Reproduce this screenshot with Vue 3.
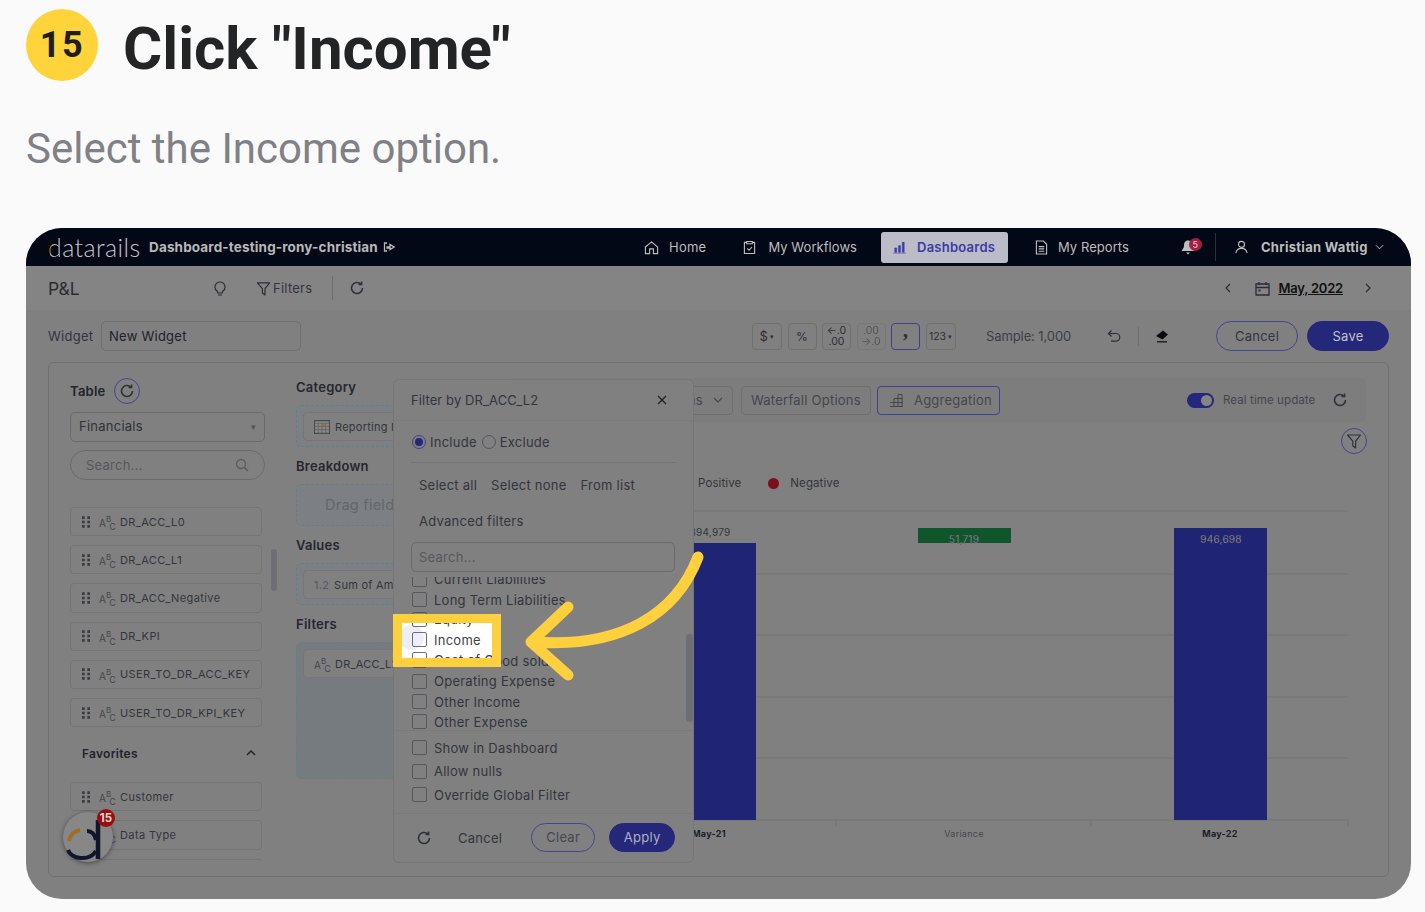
<template>
  <div class="page">
    <svg class="sprite" width="0" height="0">
      <symbol id="refresh" viewBox="0 0 16 16"><path d="M13.500 8a5.500 5.500 0 1 1-1.700-4M12.600 1.400v3h-3" fill="none" stroke="currentColor" stroke-width="1.600"/></symbol>
      <symbol id="funnel" viewBox="0 0 16 16"><path d="M1.500 2h13L9.600 8.200V15L6.800 12.800V8.200z" fill="none" stroke="currentColor" stroke-width="1.200" stroke-linejoin="round"/></symbol>
      <symbol id="grip" viewBox="0 0 9 13"><path d="M0 0h3v3H0zM6 0h3v3H6zM0 5h3v3H0zM6 5h3v3H6zM0 10h3v3H0zM6 10h3v3H6z" fill="currentColor"/></symbol>
      <symbol id="chev" viewBox="0 0 10 6"><path d="M1 1l4 4 4-4" fill="none" stroke="currentColor" stroke-width="1.100"/></symbol>
    </svg>

    <header class="head">
      <span class="badge">15</span>
      <h1>Click "Income"</h1>
    </header>
    <p class="lead">Select the Income option.</p>

    <div class="shot">
      <nav class="nav">
        <span class="logo"><i>d</i>atarails</span>
        <span class="board">Dashboard-testing-rony-christian</span>
        <svg class="board-ico" viewBox="0 0 12 10"><path d="M4 1H1.500v8H4M4 5h3V2.500L11 5 7 7.500V6H4z" fill="none" stroke="currentColor" stroke-width="1.300"/></svg>
        <a class="nav-item home">
          <svg viewBox="0 0 16 16"><path d="M1.500 7.500L8 2l6.500 5.500V14.500H10V9.500H6v5H1.500z" fill="none" stroke="currentColor" stroke-width="1.200"/></svg>
          Home
        </a>
        <a class="nav-item flows">
          <svg viewBox="0 0 14 16"><path d="M4 2.500H1.500v12h11v-12H10M4 1.500h6v2.500H4zM4.500 9l2 2 3-3.500" fill="none" stroke="currentColor" stroke-width="1.200"/></svg>
          My Workflows
        </a>
        <a class="nav-item active">
          <svg viewBox="0 0 16 14"><path d="M1 13h14M3 7.500h2V12H3zM7 5h2v7H7zM11 1.500h2V12h-2z" fill="currentColor" stroke="currentColor" stroke-width=".6"/></svg>
          Dashboards
        </a>
        <a class="nav-item reports">
          <svg viewBox="0 0 14 16"><path d="M1.500 1h7.500l3.500 3.500V15h-11zM4 7h6M4 9.500h6M4 12h6" fill="none" stroke="currentColor" stroke-width="1.200"/></svg>
          My Reports
        </a>
        <span class="bell">
          <svg viewBox="0 0 14 16"><path d="M7 1.500c-3 0-4 2.500-4 5 0 2.500-1.500 4-2.500 5.500h13C12.500 10.500 11 9 11 6.500c0-2.500-1-5-4-5zM5 13.500h4l-2 2z" fill="currentColor"/></svg>
          <b>5</b>
        </span>
        <span class="nav-sep"></span>
        <svg class="user" viewBox="0 0 14 14"><path d="M7 1a3.200 3.200 0 1 1 0 6.400A3.200 3.200 0 0 1 7 1zM1 13.500c.5-3.500 3-5 6-5s5.500 1.500 6 5" fill="none" stroke="currentColor" stroke-width="1.200"/></svg>
        <span class="name">Christian Wattig</span>
        <svg class="name-chev"><use href="#chev" /></svg>
      </nav>

      <div class="bar">
        <span class="pl">P&amp;L</span>
        <svg class="bulb" viewBox="0 0 12 15"><path d="M6 1a5 5 0 0 0-3 9c.6.5.8 1 .8 2h4.400c0-1 .2-1.500.8-2a5 5 0 0 0-3-9zM4 14h4" fill="none" stroke="currentColor" stroke-width="1.200"/></svg>
        <svg class="bar-funnel"><use href="#funnel" /></svg>
        <span class="filters">Filters</span>
        <span class="bar-sep"></span>
        <svg class="ico16"><use href="#refresh" /></svg>
        <span class="spring"></span>
        <svg class="arrow-l" viewBox="0 0 6 10"><path d="M5 1L1 5l4 4" fill="none" stroke="currentColor" stroke-width="1.200"/></svg>
        <svg class="cal" viewBox="0 0 15 15"><path d="M1 3h13v11H1zM1 6.500h13M4 1v3M11 1v3" fill="none" stroke="currentColor" stroke-width="1.300"/><path d="M3.500 8.500h2v2h-2z" fill="currentColor"/></svg>
        <span class="date">May, 2022</span>
        <svg class="arrow-r" viewBox="0 0 6 10"><path d="M1 1l4 4-4 4" fill="none" stroke="currentColor" stroke-width="1.200"/></svg>
      </div>

      <div class="tools">
        <span class="w-label">Widget</span>
        <span class="w-input">New Widget</span>
        <span class="fmt f-first">$<em>▾</em></span>
        <span class="fmt">%</span>
        <span class="fmt stack"><u>←.0</u><s>.00</s></span>
        <span class="fmt stack dim"><s>.00</s><u>→.0</u></span>
        <span class="fmt on"><b>,</b></span>
        <span class="fmt small">123<em>▾</em></span>
        <span class="sample">Sample: 1,000</span>
        <svg class="undo" viewBox="0 0 14 14"><path d="M4.500 1.500L1.500 4.500l3 3M1.500 4.500H9a3.800 3.800 0 0 1 0 7.600H4" fill="none" stroke="currentColor" stroke-width="1.200"/></svg>
        <span class="tool-sep"></span>
        <svg class="eraser" viewBox="0 0 14 14"><path d="M8 1.500l5 4-5.500 5L1 7z" fill="currentColor"/><path d="M2 12.800h10" stroke="currentColor" stroke-width="1.200"/></svg>
        <span class="btn-line">Cancel</span>
        <span class="btn-fill">Save</span>
      </div>

      <section class="panel">
        <div class="col-table">
          <div class="table-head">
            <b>Table</b>
            <span class="ring"><svg class="ico16"><use href="#refresh" /></svg></span>
          </div>
          <div class="select">Financials<em>▾</em></div>
          <div class="search">
            Search...
            <svg viewBox="0 0 14 14"><circle cx="6" cy="6" r="4.500" fill="none" stroke="currentColor" stroke-width="1.300"/><path d="M9.500 9.500L13 13" stroke="currentColor" stroke-width="1.500"/></svg>
          </div>
          <div class="fields">
            <div v-for="f in fields" :key="f" class="field">
              <svg class="grip"><use href="#grip" /></svg>
              <span class="abc">A<sup>B</sup><sub>C</sub></span>
              {{ f }}
            </div>
          </div>
          <div class="fav"><b>Favorites</b><svg viewBox="0 0 10 6"><path d="M1 5l4-4 4 4" fill="none" stroke="currentColor" stroke-width="1.500"/></svg></div>
          <div class="fields">
            <div v-for="f in favorites" :key="f" class="field">
              <svg class="grip"><use href="#grip" /></svg>
              <span class="abc">A<sup>B</sup><sub>C</sub></span>
              {{ f }}
            </div>
            <div class="field cut"></div>
          </div>
        </div>
        <span class="list-scroll"></span>

        <div class="col-drop">
          <b>Category</b>
          <div class="drop h42"><span class="chip">
            <svg viewBox="0 0 15 13"><path d="M.5.500h14v12H.5z" fill="#8a8a8a" stroke="#4a4a4a"/><path d="M.5 3h14M.5 6h14M.5 9h14M4 3v9M7.500 3v9M11 3v9" stroke="#5c5c5c" stroke-width=".7"/><path d="M8 4h3v2H8z" fill="#a8682c"/></svg>
            Reporting Month</span></div>
          <b>Breakdown</b>
          <div class="drop h42 placeholder">Drag fields here</div>
          <b>Values</b>
          <div class="drop h42"><span class="chip"><i class="num">1.2</i>Sum of Amount</span></div>
          <b>Filters</b>
          <div class="drop tall"><span class="chip"><span class="abc">A<sup>B</sup><sub>C</sub></span>DR_ACC_L2</span></div>
        </div>

        <div class="col-chart">
          <div class="chart-tools">
            <span class="opt">Options<svg><use href="#chev" /></svg></span>
            <span class="opt">Waterfall Options</span>
            <span class="opt sel">
              <svg viewBox="0 0 15 14"><path d="M1 13.500h13M1 9.500h13M5 5.500h9M5 13.500v-8M9 13.500V1.500h4v12" fill="none" stroke="currentColor" stroke-width="1"/></svg>
              Aggregation
            </span>
            <span class="toggle"><i></i></span>
            <span class="rt">Real time update</span>
            <svg class="ico16"><use href="#refresh" /></svg>
          </div>
          <div class="chart-filter"><span class="ring"><svg class="ico16"><use href="#funnel" /></svg></span></div>
          <div class="legend">
            <span>Positive</span>
            <i></i>
            <span>Negative</span>
          </div>
          <svg class="chart" width="856" height="360" viewBox="510 490 856 360">
            <g stroke="#727272" stroke-width="1">
              <path v-for="y in gridY" :key="y" :d="`M510 ${y}H1348`" />
              <path d="M510 820H1348M836 820v6M1091 820v6M1348 820v6" />
            </g>
            <rect x="663" y="543" width="93" height="277" fill="#202475" />
            <rect x="918" y="528" width="93" height="15" fill="#10562c" />
            <rect x="1174" y="528" width="93" height="292" fill="#202475" />
            <text x="710" y="536" class="val" text-anchor="middle">894,979</text>
            <text x="964" y="543" class="val" text-anchor="middle">51,719</text>
            <text x="1221" y="543" class="val" text-anchor="middle">946,698</text>
            <text x="709" y="837" class="tick bold" text-anchor="middle">May-21</text>
            <text x="964" y="837" class="tick" text-anchor="middle">Variance</text>
            <text x="1220" y="837" class="tick bold" text-anchor="middle">May-22</text>
          </svg>
        </div>
      </section>

      <div class="popup">
        <div class="pop-title">Filter by DR_ACC_L2<svg viewBox="0 0 10 10"><path d="M1 1l8 8M9 1l-8 8" stroke="currentColor" stroke-width="1.300"/></svg></div>
        <div class="radios">
          <span class="radio on"><i></i></span>Include
          <span class="radio"></span>Exclude
        </div>
        <div class="links"><span>Select all</span><span>Select none</span><span>From list</span></div>
        <div class="adv">Advanced filters</div>
        <div class="pop-search">Search...</div>
        <div class="pop-list">
          <div v-for="o in options" :key="o.label" class="opt-row" :class="{ covered: o.covered }"><span class="box"></span>{{ o.label }}</div>
          <span class="pop-scroll"></span>
        </div>
        <div class="pop-checks">
          <div v-for="c in checks" :key="c" class="check"><span class="box"></span>{{ c }}</div>
        </div>
        <div class="pop-foot">
          <svg class="ico16"><use href="#refresh" /></svg>
          <span class="foot-cancel">Cancel</span>
          <span class="foot-clear">Clear</span>
          <span class="foot-apply">Apply</span>
        </div>
      </div>

      <div class="spot">
        <span class="spot-halo"></span>
        <div class="spot-rows">
          <div v-for="o in spotRows" :key="o" class="opt-row"><span class="box"></span>{{ o }}</div>
        </div>
      </div>

      <svg class="pointer" width="1385" height="671" viewBox="26 228 1385 671">
        <path d="M698 557C676 615 620 648 535 642M568 607L531 642L568 675" fill="none" stroke="#ffd03d" stroke-width="11" stroke-linecap="round" stroke-linejoin="round"/>
      </svg>

      <div class="launcher">
        <svg viewBox="0 0 50 50"><path d="M6 29a13 13 0 0 1 11-11" fill="none" stroke="#9c7020" stroke-width="4"/><path d="M5 38c3 9 21 12 28 1M24 19c5 0 8 4 9 9" fill="none" stroke="#10172c" stroke-width="4"/><path d="M35 8v39" stroke="#10172c" stroke-width="4.500"/></svg>
        <b>15</b>
      </div>
    </div>
  </div>
</template>

<script setup>
const fields = ['DR_ACC_L0', 'DR_ACC_L1', 'DR_ACC_Negative', 'DR_KPI', 'USER_TO_DR_ACC_KEY', 'USER_TO_DR_KPI_KEY']
const favorites = ['Customer', 'Data Type']
const gridY = [511, 574, 635, 697, 758]
const options = [
  { label: 'Current Liabilities' },
  { label: 'Long Term Liabilities' },
  { label: 'Equity', covered: true },
  { label: 'Income', covered: true },
  { label: 'Cost of Good sold' },
  { label: 'Operating Expense' },
  { label: 'Other Income' },
  { label: 'Other Expense' }
]
const spotRows = ['Equity', 'Income', 'Cost of Good sold']
const checks = ['Show in Dashboard', 'Allow nulls', 'Override Global Filter']
</script>

<style>
html, body { background: #fafafb; }
</style>

<style scoped>
.page { width: 1425px; height: 912px; overflow: hidden; box-sizing: border-box; padding: 9px 14px 0 26px; background: #fafafb; font-family: Inter, sans-serif; }
.sprite { position: absolute; }
.head { display: flex; align-items: center; gap: 25px; height: 72px; }
.badge { width: 72px; height: 72px; border-radius: 50%; background: #ffd43b; color: #1e1e1e; display: flex; align-items: center; justify-content: center; font: 700 36px Roboto, sans-serif; letter-spacing: 1.500px; }
h1 { margin: 8px 0 0; font: 700 60px/72px Roboto, sans-serif; color: #222426; }
.lead { margin: 42px 0 0; height: 52px; font: 400 42px/52px Roboto, sans-serif; color: #808184; }
.shot { position: relative; width: 1385px; height: 671px; margin-top: 53px; border-radius: 36px; overflow: hidden; background: #808080; color: #2b2d36; font-size: 13px; letter-spacing: .25px; }

.nav { display: flex; align-items: center; height: 38px; background: #030817; color: #bdbdbd; padding-left: 22px; }
.logo { width: 92px; font: 300 25px Lato, sans-serif; color: #c4c4c4; letter-spacing: .4px; }
.logo i { font-style: normal; background: linear-gradient(100deg, #b87a20 32%, #c4c4c4 33%); -webkit-background-clip: text; background-clip: text; color: transparent; }
.board { margin-left: 9px; font-weight: 700; font-size: 13.500px; letter-spacing: .15px; color: #b8b8b8; width: 232px; white-space: nowrap; }
.board-ico { width: 12px; height: 10px; color: #b8b8b8; margin-left: 2px; }
.nav-item { display: flex; align-items: center; gap: 10px; white-space: nowrap; }
.nav-item svg { width: 15px; height: 15px; }
.home { margin-left: 249px; }
.flows { margin-left: 37px; gap: 12px; letter-spacing: .05px; }
.flows svg { width: 13px; }
.active { margin-left: 24px; height: 31px; width: 127px; box-sizing: border-box; padding-left: 11px; background: #bcbcc8; border-radius: 3px; color: #3b3ba6; font-weight: 600; }
.reports { margin-left: 27px; letter-spacing: .05px; }
.reports svg { width: 13px; }
.bell { position: relative; margin-left: 52px; width: 14px; height: 16px; }
.bell svg { width: 14px; height: 16px; display: block; }
.bell b { position: absolute; left: 8px; top: -1px; width: 13px; height: 13px; border-radius: 50%; background: #a81c44; color: #c8c8c8; font-size: 9px; font-weight: 500; line-height: 13px; text-align: center; letter-spacing: 0; }
.nav-sep { width: 1px; height: 28px; background: #2b2f3a; margin-left: 20px; }
.user { width: 13px; height: 14px; margin-left: 19px; }
.name { margin-left: 13px; font-weight: 700; width: 112px; white-space: nowrap; letter-spacing: .3px; }
.name-chev { width: 9px; height: 6px; margin-left: 2px; }

.bar { display: flex; align-items: center; height: 44px; background: #848484; padding: 0 40px 0 22px; color: #2a2c33; }
.pl { width: 157px; font-size: 17.500px; letter-spacing: 0; }
.bulb { width: 12px; height: 15px; margin-left: 9px; }
.bar-funnel { width: 15px; height: 15px; margin-left: 30px; }
.filters { margin-left: 2px; width: 38px; color: #33353c; white-space: nowrap; }
.bar-sep { width: 1px; height: 24px; background: #6e6e6e; margin-left: 21px; }
.ico16 { width: 16px; height: 16px; flex: none; color: #2f3138; }
.bar .ico16 { margin-left: 16px; }
.spring { flex: 1; }
.arrow-l, .arrow-r { width: 6px; height: 10px; }
.cal { width: 15px; height: 15px; margin-left: 24px; }
.date { margin-left: 8px; font-weight: 600; text-decoration: underline; letter-spacing: -.2px; white-space: nowrap; color: #111; }
.arrow-r { margin-left: 22px; }

.tools { display: flex; align-items: center; height: 52px; padding: 0 22px; color: #2d2f36; }
.w-label { width: 53px; flex: none; color: #33353c; }
.w-input { width: 200px; flex: none; height: 30px; box-sizing: border-box; border: 1px solid #6f6f6f; border-radius: 5px; padding-left: 7px; line-height: 28px; color: #1f2128; }
.fmt { width: 29px; height: 27px; box-sizing: border-box; border: 1px solid #707070; border-radius: 4px; margin-left: 5.500px; display: flex; align-items: center; justify-content: center; font-size: 12px; flex: none; }
.fmt em { font-style: normal; font-size: 7px; margin-left: 2px; }
.f-first { margin-left: 451px; width: 30px; font-size: 13px; }
.stack { flex-direction: column; line-height: 11px; font-size: 10.500px; letter-spacing: 0; }
.stack u { text-decoration: none; }
.stack s { text-decoration: none; }
.stack.dim { opacity: .55; }
.fmt.on { border-color: #3f3f95; }
.fmt.on b { font: 700 20px/1 "Liberation Serif", serif; position: relative; top: -6px; }
.fmt.small { font-size: 10.500px; letter-spacing: 0; width: 30px; }
.sample { margin-left: 30.500px; color: #3d3f45; width: 86px; flex: none; white-space: nowrap; letter-spacing: -.1px; }
.undo { width: 14px; height: 14px; margin-left: 35px; flex: none; }
.tool-sep { width: 1px; height: 19px; background: #6e6e6e; margin-left: 17px; flex: none; }
.eraser { width: 14px; height: 14px; margin-left: 16px; color: #0c0c10; flex: none; }
.btn-line, .btn-fill { width: 82px; height: 30px; box-sizing: border-box; border-radius: 15px; text-align: center; line-height: 28px; flex: none; }
.btn-line { margin-left: 47px; border: 1px solid #45458f; color: #33353c; }
.btn-fill { margin-left: 9px; background: #24277a; border: 1px solid #24277a; color: #c2c2cc; }

.panel { display: flex; margin: 0 22px; height: 515px; box-sizing: border-box; border: 1px solid #6f6f6f; border-radius: 6px; padding: 15px 22px 0 21px; overflow: hidden; }
.col-table { width: 195px; flex: none; }
.table-head { display: flex; align-items: center; height: 26px; gap: 8px; }
.table-head b { font-weight: 600; color: #22242c; }
.ring { width: 26px; height: 26px; box-sizing: border-box; border: 1px solid #45458f; border-radius: 50%; display: flex; align-items: center; justify-content: center; }
.select { margin-top: 8px; height: 30px; box-sizing: border-box; border: 1px solid #6a6a6a; border-radius: 5px; padding: 0 8px; line-height: 27px; display: flex; justify-content: space-between; color: #2f3138; }
.select em { font-style: normal; font-size: 9px; color: #555; }
.search { margin-top: 8px; height: 30px; box-sizing: border-box; border: 1px solid #6a6a6a; border-radius: 15px; padding: 0 15px; line-height: 27px; display: flex; justify-content: space-between; align-items: center; color: #56585c; }
.search svg { width: 14px; height: 14px; color: #5c5c5c; }
.fields { display: flex; flex-direction: column; gap: 9px; width: 192px; margin-top: 27px; }
.field { display: flex; align-items: center; height: 29.200px; flex: none; box-sizing: border-box; border: 1px solid #747474; border-radius: 4px; padding-left: 11px; font-size: 11px; color: #33353c; letter-spacing: .4px; white-space: nowrap; }
.cut { height: 2px; border-bottom: 0; border-radius: 4px 4px 0 0; }
.grip { width: 8px; height: 12px; color: #3a3a40; margin-right: 9px; flex: none; }
.abc { display: inline-flex; width: 16px; font-size: 10px; color: #45474c; margin-right: 5px; letter-spacing: 0; flex: none; line-height: 1; align-items: flex-end; }
.abc sup { font-size: 8px; margin-bottom: 5px; line-height: 1; vertical-align: baseline; }
.abc sub { font-size: 9px; line-height: 1; margin: 0 0 -3px -2px; vertical-align: baseline; }
.fav { display: flex; justify-content: space-between; align-items: center; margin: 16px 9px 0 12px; height: 20px; font-size: 12px; color: #22242c; }
.fav b { font-weight: 600; }
.fav svg { width: 10px; height: 6px; }
.fav + .fields { margin-top: 19px; }
.list-scroll { width: 6px; height: 42px; background: #6c7075; border-radius: 3px; margin: 171px 0 0 6px; flex: none; }

.col-drop { width: 200px; margin-left: 19px; flex: none; display: flex; flex-direction: column; }
.col-drop b { font-weight: 600; color: #25272e; height: 19px; line-height: 18px; flex: none; margin-bottom: 8px; }
.drop { box-sizing: border-box; border: 1px dashed #5f8088; border-radius: 5px; background: #7c8084; margin-bottom: 10px; flex: none; padding: 6px; }
.h42 { height: 42px; }
.tall { height: 137px; background: #767b80; }
.chip { display: flex; align-items: center; height: 29px; box-sizing: border-box; border: 1px solid #767676; border-radius: 4px; background: #808080; padding-left: 10px; font-size: 11px; white-space: nowrap; overflow: hidden; color: #33353c; }
.chip svg { width: 16px; height: 14px; margin-right: 5px; flex: none; }
.num { font-style: normal; color: #55575c; margin-right: 5px; }
.placeholder { font-size: 14.500px; color: #63666a; padding: 11px 0 0 28px; white-space: nowrap; }

.col-chart { flex: 1; margin-left: 14px; min-width: 0; position: relative; }
.chart-tools { display: flex; align-items: center; justify-content: flex-end; height: 44px; background: #7d7d7d; border-radius: 4px; margin-right: 0; padding-right: 18px; box-sizing: border-box; color: #44464c; }
.opt { height: 29px; box-sizing: border-box; border: 1px solid #6f6f6f; border-radius: 4px; display: flex; align-items: center; padding: 0 9px; margin-right: 6px; white-space: nowrap; flex: none; }
.opt:first-child { margin-right: 8px; }
.opt svg { width: 10px; height: 6px; margin-left: 10px; }
.opt.sel { border-color: #3f3f95; padding: 0 7px 0 11px; }
.opt.sel svg { width: 15px; height: 14px; margin: 0 10px 0 0; }
.toggle { width: 27px; height: 15px; border-radius: 8px; background: #24277a; margin-left: 181px; position: relative; flex: none; }
.toggle i { position: absolute; right: 2px; top: 2px; width: 11px; height: 11px; border-radius: 50%; background: #858585; }
.rt { margin-left: 9px; font-size: 11.500px; letter-spacing: .1px; width: 95px; white-space: nowrap; }
.chart-tools .ico16 { margin-left: 14px; }
.chart-filter { position: absolute; right: -1px; top: 50px; }
.legend { position: absolute; left: 188px; top: 98px; display: flex; align-items: center; font-size: 11.500px; color: #33353c; letter-spacing: .1px; }
.legend i { width: 11px; height: 11px; border-radius: 50%; background: #7c0e1c; margin: 0 11px 0 27px; }
.chart { position: absolute; left: 0; top: 112px; }
.val { font: 10px Inter, sans-serif; fill: #33353c; }
.chart text:nth-of-type(2), .chart text:nth-of-type(3) { fill: #a6a6ae; stroke: #33353c; stroke-width: .3px; }
.tick { font: 9px Inter, sans-serif; fill: #45474c; }
.tick.bold { font-weight: 700; fill: #1c1e28; }

.popup { position: absolute; left: 367px; top: 151px; width: 301px; height: 484px; box-sizing: border-box; background: #808080; border: 1px solid #767676; border-radius: 6px; color: #33353c; display: flex; flex-direction: column; overflow: hidden; }
.pop-title { display: flex; align-items: center; height: 41px; flex: none; padding: 0 26px 0 17px; justify-content: space-between; border-bottom: 1px solid #7a7a7a; box-sizing: border-box; letter-spacing: .1px; }
.pop-title svg { width: 10px; height: 10px; color: #1f2128; }
.radios { display: flex; align-items: center; height: 42px; flex: none; margin: 0 17px; padding-left: 1px; box-sizing: border-box; border-bottom: 1px solid #747474; }
.radio { width: 14px; height: 14px; border: 1px solid #55555c; border-radius: 50%; margin-left: 5px; margin-right: 4px; box-sizing: border-box; display: flex; align-items: center; justify-content: center; }
.radio:first-child { margin-left: 0; }
.radio i { width: 8px; height: 8px; border-radius: 50%; background: #24277a; }
.radio.on { border-color: #3f3f95; }
.links { display: flex; gap: 14px; padding-left: 25px; height: 44px; align-items: center; flex: none; }
.adv { padding-left: 25px; height: 28px; line-height: 28px; flex: none; }
.pop-search { margin: 7px 18px 0 17px; height: 30px; box-sizing: border-box; border: 1px solid #6a6a6a; border-radius: 5px; padding-left: 7px; line-height: 28px; color: #56585c; flex: none; }
.pop-list { position: relative; height: 154px; margin-top: 5px; flex: none; overflow: hidden; border-bottom: 1px solid #7a7a7a; box-sizing: border-box; }
.opt-row { display: flex; align-items: center; height: 20.400px; padding-left: 18px; color: #33353c; white-space: nowrap; }
.opt-row.covered { color: transparent; }
.pop-list .opt-row:first-child { margin-top: -8px; }
.box { width: 15px; height: 15px; box-sizing: border-box; border: 1px solid #56565c; border-radius: 2px; margin-right: 7px; flex: none; }
.pop-scroll { position: absolute; right: 0; top: 57px; width: 7px; height: 88px; background: #6c7075; border-radius: 3px; }
.pop-checks { padding-top: 5px; flex: none; height: 83px; box-sizing: border-box; border-bottom: 1px solid #7a7a7a; }
.check { display: flex; align-items: center; height: 23.600px; padding-left: 18px; white-space: nowrap; }
.pop-foot { display: flex; align-items: center; height: 47px; padding-left: 22px; }
.foot-cancel { margin-left: 26px; }
.foot-clear, .foot-apply { height: 29px; border-radius: 15px; box-sizing: border-box; text-align: center; line-height: 27px; }
.foot-clear { width: 64px; margin-left: 29px; border: 1px solid #45458f; color: #45474c; }
.foot-apply { width: 66px; margin-left: 14px; background: #24277a; border: 1px solid #24277a; color: #b0b0c0; }

.spot { position: absolute; left: 367px; top: 386px; width: 108px; height: 53px; box-sizing: border-box; border: 9.500px solid #ffd03d; background: #fff; overflow: hidden; }
.spot-rows { margin: -14px 0 0 -8px; position: relative; z-index: 1; }
.spot .opt-row { color: #3d3f47; height: 20.400px; }
.spot .box { border-color: #6e6e78; }
.spot-halo { position: absolute; left: -3px; top: 2px; width: 25px; height: 25px; border-radius: 50%; background: #eeeef8; }
.pointer { position: absolute; left: 0; top: 0; pointer-events: none; }

.launcher { position: absolute; left: 37px; top: 584px; width: 50px; height: 50px; border-radius: 50%; background: #878787; box-shadow: 0 1px 5px rgba(0, 0, 0, .45); }
.launcher svg { width: 50px; height: 50px; display: block; }
.launcher b { position: absolute; left: 34px; top: -3px; width: 18px; height: 18px; border-radius: 50%; background: #9c0c0c; color: #d8d8d8; font-size: 11.500px; line-height: 18px; text-align: center; letter-spacing: 0; font-weight: 700; }
</style>
